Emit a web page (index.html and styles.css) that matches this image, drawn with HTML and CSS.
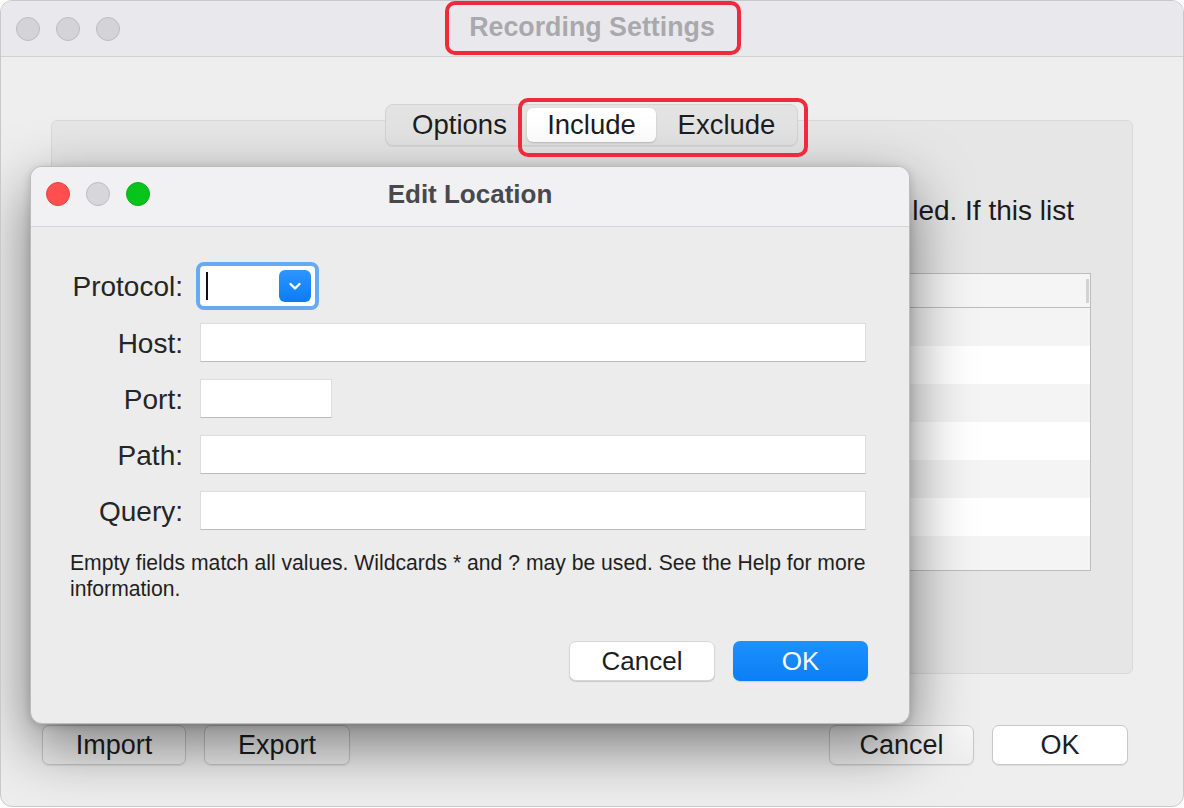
FILE: index.html
```html
<!DOCTYPE html>
<html>
<head>
<meta charset="utf-8">
<link rel="stylesheet" href="styles.css">
</head>
<body>
<div class="window">
  <div class="titlebar">
    <div class="lights">
      <span class="light inactive"></span>
      <span class="light inactive"></span>
      <span class="light inactive"></span>
    </div>
    <div class="wtitle">Recording Settings</div>
    <div></div>
  </div>
  <div class="wcontent">
    <div class="tabview">
      <div class="segmented">
        <div class="seg first">Options</div>
        <div class="seg sel">Include</div>
        <div class="seg">Exclude</div>
      </div>
      <div class="panel">
        <p class="desc">led. If this list</p>
        <div class="table">
          <div class="thead"><span class="tgrip"></span></div>
          <div class="trow odd"></div>
          <div class="trow"></div>
          <div class="trow odd"></div>
          <div class="trow"></div>
          <div class="trow odd"></div>
          <div class="trow"></div>
          <div class="trow odd"></div>
        </div>
      </div>
    </div>
    <div class="bottom">
      <div class="group">
        <button class="wbtn import">Import</button>
        <button class="wbtn export">Export</button>
      </div>
      <div class="group">
        <button class="wbtn cancel">Cancel</button>
        <button class="wbtn okw">OK</button>
      </div>
    </div>
  </div>

  <div class="annot annot-title"></div>
  <div class="annot annot-tabs"></div>

  <div class="dialog">
    <div class="dtitlebar">
      <div class="lights">
        <span class="light red"></span>
        <span class="light gray"></span>
        <span class="light green"></span>
      </div>
      <div class="dtitle">Edit Location</div>
      <div></div>
    </div>
    <div class="form">
      <label class="lbl">Protocol:</label>
      <div class="combo">
        <span class="caret"></span>
        <span class="cbtn">
          <svg width="32" height="32" viewBox="0 0 32 32"><path d="M11.5 14 L16 18.5 L20.5 14" fill="none" stroke="#fff" stroke-width="2.4" stroke-linecap="round" stroke-linejoin="round"/></svg>
        </span>
      </div>
      <label class="lbl">Host:</label>
      <div class="field wide"></div>
      <label class="lbl">Port:</label>
      <div class="field port"></div>
      <label class="lbl">Path:</label>
      <div class="field wide"></div>
      <label class="lbl">Query:</label>
      <div class="field wide"></div>
    </div>
    <p class="help">Empty fields match all values. Wildcards * and ? may be used. See the Help for more information.</p>
    <div class="dbuttons">
      <button class="dbtn dcancel">Cancel</button>
      <button class="dbtn dok">OK</button>
    </div>
  </div>
</div>
</body>
</html>
```

FILE: styles.css
```css
* { box-sizing: border-box; }

html, body {
  margin: 0;
  padding: 0;
  background: #ffffff;
  font-family: "Liberation Sans", Arial, sans-serif;
}

.window {
  position: relative;
  width: 1184px;
  height: 807px;
  background: #eeeeee;
  border: 1px solid #c9c9cc;
  border-radius: 12px;
  overflow: hidden;
  display: flex;
  flex-direction: column;
}

.titlebar {
  height: 56px;
  flex: none;
  background: #e9e9ed;
  border-bottom: 1px solid #d2d2d4;
  display: grid;
  grid-template-columns: 1fr auto 1fr;
  align-items: center;
}

.lights {
  display: flex;
  gap: 16px;
  padding-left: 15px;
}

.light {
  width: 24px;
  height: 24px;
  border-radius: 50%;
  display: block;
}

.light.inactive { background: #d3d3d8; border: 1px solid #bcbcc1; }
.light.red { background: #ff4f4f; border: 1px solid #e24343; }
.light.gray { background: #d6d6db; border: 1px solid #bdbdc2; }
.light.green { background: #07c41a; border: 1px solid #0eac1c; }

.wtitle {
  font-size: 26.8px;
  font-weight: bold;
  color: #a9a9ad;
  padding-bottom: 2px;
}

.wcontent {
  flex: 1;
  padding: 47px 55px 0 41px;
  display: flex;
  flex-direction: column;
}

.tabview {
  display: flex;
  flex-direction: column;
  align-items: center;
  margin-left: 9px;
}

.segmented {
  position: relative;
  z-index: 1;
  display: flex;
  padding: 3px;
  height: 42px;
  background: #e3e3e3;
  border: 1px solid #d3d3d3;
  border-radius: 8px;
  box-shadow: 0 1px 1px rgba(0,0,0,0.06);
  margin-left: 4px;
}

.seg {
  width: 135px;
  display: flex;
  align-items: center;
  justify-content: center;
  font-size: 27.5px;
  color: #1d1d1d;
  border-radius: 6px;
}

.seg.first { padding-left: 6px; }

.seg.sel {
  background: #ffffff;
  margin: 0 3px 0 3px;
  width: 129px;
  box-shadow: 0 1px 2px rgba(0,0,0,0.18);
}

.panel {
  width: 1082px;
  height: 554px;
  margin-top: -26px;
  background: #e6e6e6;
  border: 1px solid #d9d9d9;
  border-radius: 6px;
  display: flex;
  flex-direction: column;
  align-self: flex-start;
}

.desc {
  margin: 74px 0 0 0;
  padding-right: 58px;
  line-height: 32px;
  font-size: 28px;
  color: #1b1b1b;
  white-space: nowrap;
  text-align: right;
  overflow: hidden;
}

.table {
  margin: 46px 41px 0 41px;
  height: 298px;
  border: 1px solid #bdbdbd;
  overflow: hidden;
  background: #ffffff;
}

.thead {
  height: 34px;
  background: #f5f5f5;
  border-bottom: 1px solid #bdbdbd;
  display: flex;
  justify-content: flex-end;
  align-items: center;
  padding-right: 1px;
}

.tgrip {
  width: 3px;
  height: 24px;
  background: #d2d2d2;
}

.trow { height: 38px; background: #ffffff; }
.trow.odd { background: #f4f4f4; }

.bottom {
  margin-top: 51px;
  display: flex;
  justify-content: space-between;
}

.group {
  display: flex;
  gap: 18px;
}

.wbtn {
  height: 40px;
  font-family: "Liberation Sans", Arial, sans-serif;
  font-size: 27px;
  color: #1d1d1d;
  background: linear-gradient(#f7f7f7, #eeeeee);
  border: 1px solid #c8c8c8;
  border-radius: 7px;
  box-shadow: 0 1px 1px rgba(0,0,0,0.08);
  padding: 0;
}

.import { width: 144px; }
.export { width: 146px; }
.cancel { width: 145px; }
.okw { width: 136px; background: #ffffff; }

.annot {
  position: absolute;
  border: 4px solid #ef2a3b;
  border-radius: 10px;
  z-index: 5;
}

.annot-title { left: 444px; top: 0px; width: 296px; height: 54px; }
.annot-tabs { left: 517px; top: 97px; width: 290px; height: 59px; }

.dialog {
  position: absolute;
  left: 29px;
  top: 165px;
  width: 880px;
  height: 558px;
  background: #ececec;
  border: 1px solid #bcbcbf;
  border-radius: 12px;
  box-shadow: 0 22px 60px rgba(0,0,0,0.5), 0 2px 8px rgba(0,0,0,0.16);
  overflow: hidden;
  display: flex;
  flex-direction: column;
  z-index: 3;
}

.dtitlebar {
  height: 60px;
  flex: none;
  background: #f1f1f3;
  border-bottom: 1px solid #d5d5d7;
  display: grid;
  grid-template-columns: 1fr auto 1fr;
  align-items: center;
  padding-bottom: 5px;
}

.dtitle {
  font-size: 26px;
  font-weight: bold;
  color: #48484d;
}

.form {
  display: grid;
  grid-template-columns: 113px 1fr;
  column-gap: 17px;
  row-gap: 17px;
  padding: 39px 43px 0 39px;
  align-items: center;
}

.lbl {
  font-size: 28px;
  color: #252525;
  text-align: right;
  white-space: nowrap;
  position: relative;
  top: 1px;
}

.field {
  height: 39px;
  background: #ffffff;
  border: 1px solid #dddddd;
  border-bottom-color: #bcbcbc;
}

.field.port { width: 132px; }

.combo {
  width: 115px;
  height: 40px;
  background: #ffffff;
  border-radius: 4px;
  outline: 4px solid #68aaf2;
  outline-offset: 0;
  display: flex;
  align-items: center;
  justify-content: space-between;
  padding: 0 4px 0 6px;
}

.caret {
  width: 2px;
  height: 28px;
  background: #111111;
}

.cbtn {
  width: 32px;
  height: 32px;
  border-radius: 6px;
  background: linear-gradient(#2d95ff, #0a7df3);
  display: block;
}

.cbtn svg { display: block; }

.help {
  margin: 20px 43px 0 39px;
  font-size: 21.15px;
  line-height: 26px;
  color: #1f1f1f;
}

.dbuttons {
  margin-top: 39px;
  padding-right: 41px;
  display: flex;
  justify-content: flex-end;
  gap: 18px;
}

.dbtn {
  height: 40px;
  font-family: "Liberation Sans", Arial, sans-serif;
  font-size: 26px;
  border-radius: 7px;
  padding: 0;
}

.dcancel {
  width: 146px;
  background: #ffffff;
  color: #1d1d1d;
  border: 1px solid #d6d6d6;
  box-shadow: 0 1px 1px rgba(0,0,0,0.15);
}

.dok {
  width: 135px;
  color: #ffffff;
  border: none;
  background: linear-gradient(#1e90ff, #0a7ff4);
  box-shadow: 0 1px 1px rgba(0,0,0,0.12);
}
```
